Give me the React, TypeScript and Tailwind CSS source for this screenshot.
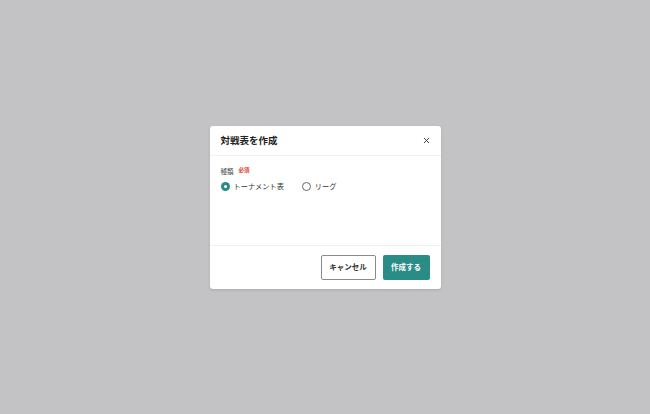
import { X } from 'lucide-react';

export default function App() {
  return (
    <div
      className="flex h-[414px] w-[650px] items-center justify-center bg-[#c3c3c5]"
      style={{ fontFamily: '"Noto Sans CJK JP", "Noto Sans", sans-serif' }}
    >
      <div className="flex w-[231px] flex-col rounded-[3px] bg-white shadow-sm">
        {/* Header */}
        <div className="flex h-[30px] items-center justify-between border-b border-[#f0f0f0] pl-[11px] pr-[10px] pt-[1px]">
          <h2 className="text-[9.5px] font-bold leading-none text-[#222]">対戦表を作成</h2>
          <button type="button" className="text-[#333]" aria-label="閉じる">
            <X className="h-[9px] w-[9px]" strokeWidth={2.5} />
          </button>
        </div>

        {/* Body */}
        <div className="h-[90px] border-b border-[#f0f0f0] px-[11px] pt-[12px]">
          <div className="flex items-center gap-[5px] leading-none">
            <span className="text-[6.5px] text-[#444]">種類</span>
            <span className="text-[5.5px] font-bold text-[#e0452f]">必須</span>
          </div>
          <div className="mt-[8px] flex items-center gap-[18px]">
            <label className="flex items-center gap-[4px]">
              <span className="flex h-[9px] w-[9px] items-center justify-center rounded-full bg-[#2a8c86]">
                <span className="h-[3px] w-[3px] rounded-full bg-white" />
              </span>
              <span className="text-[7.2px] leading-none text-[#333]">トーナメント表</span>
            </label>
            <label className="flex items-center gap-[4px]">
              <span className="h-[9px] w-[9px] rounded-full border border-[#666] bg-white" />
              <span className="text-[7.2px] leading-none text-[#333]">リーグ</span>
            </label>
          </div>
        </div>

        {/* Footer */}
        <div className="flex h-[43px] items-center justify-end gap-[7px] pr-[11px]">
          <button
            type="button"
            className="h-[25px] w-[55px] rounded-[2px] border border-[#8a8a8a] bg-white text-[7.5px] font-bold text-[#333]"
          >
            キャンセル
          </button>
          <button
            type="button"
            className="h-[25px] w-[47px] rounded-[2px] bg-[#2a8c86] text-[7.5px] font-bold text-white"
          >
            作成する
          </button>
        </div>
      </div>
    </div>
  );
}
